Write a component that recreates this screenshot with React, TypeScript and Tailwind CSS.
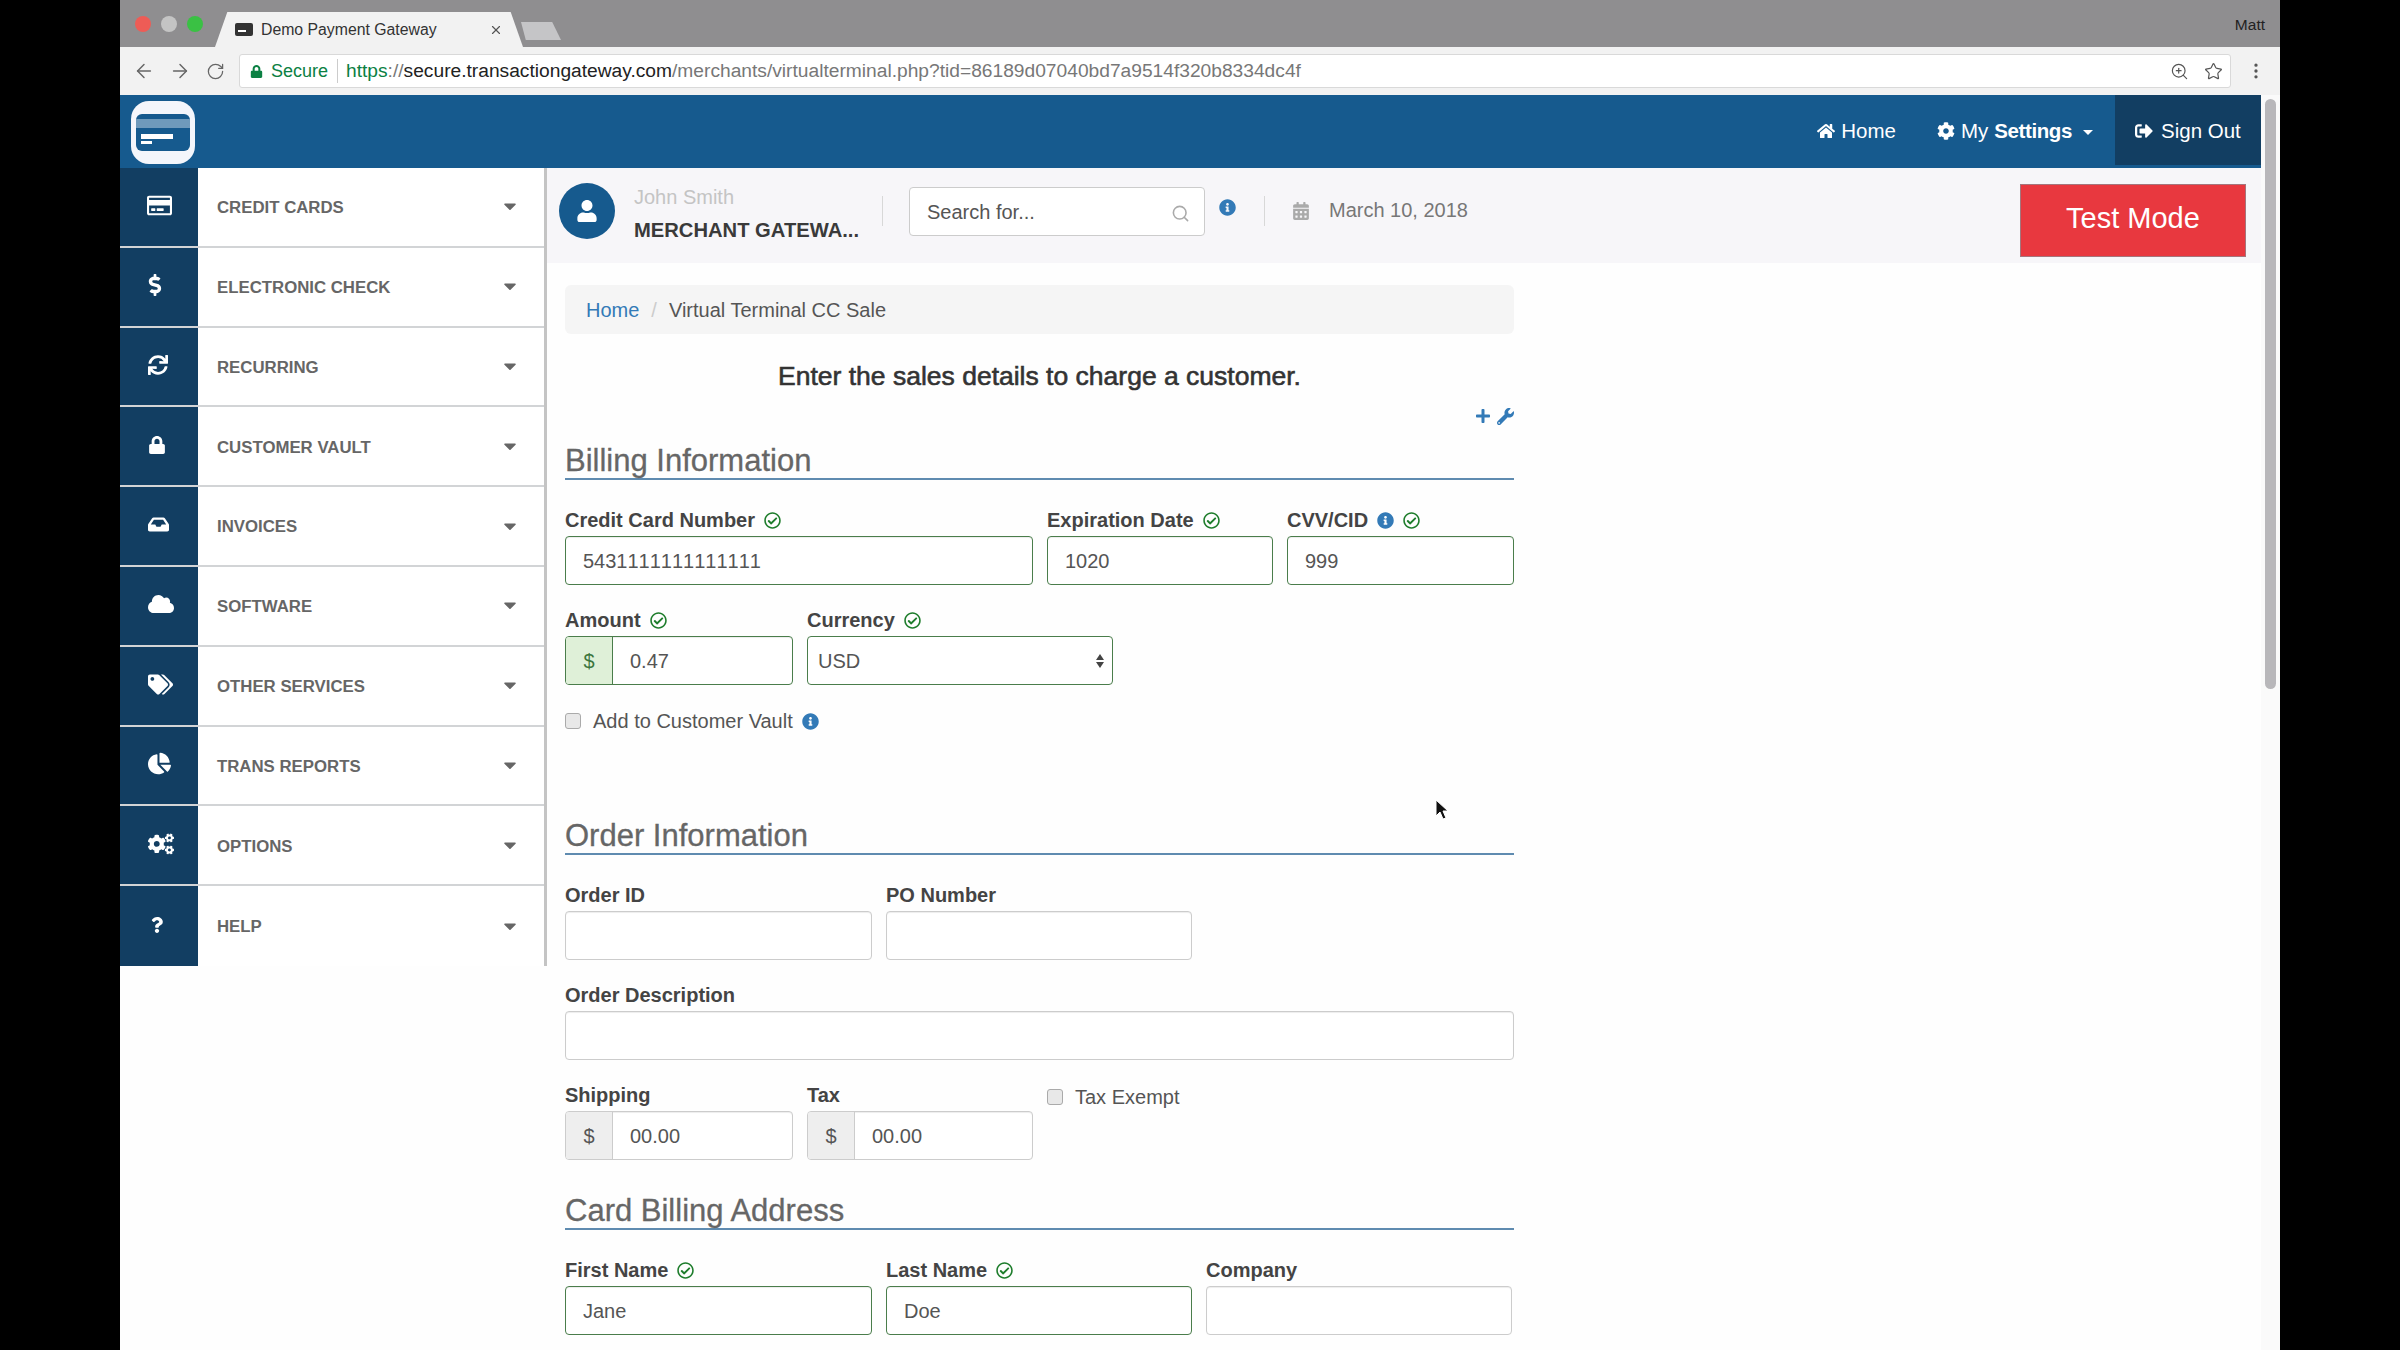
import type { ReactNode } from 'react';
import {
  FaRegCreditCard, FaDollarSign, FaSync, FaLock, FaInbox, FaCloud, FaTags, FaChartPie, FaCogs, FaQuestion,
  FaHome, FaCog, FaSignOutAlt, FaInfoCircle, FaRegCheckCircle, FaPlus, FaWrench, FaCalendarAlt, FaUser, FaCaretDown,
} from 'react-icons/fa';
import { ArrowLeft, ArrowRight, RotateCw, ZoomIn, Star, EllipsisVertical, Search, X } from 'lucide-react';

const menu = [
  { label: 'CREDIT CARDS', icon: <FaRegCreditCard size={25} />, pad: 'pl-[27px]' },
  { label: 'ELECTRONIC CHECK', icon: <FaDollarSign size={22} />, pad: 'pl-[24px]' },
  { label: 'RECURRING', icon: <FaSync size={20} />, pad: 'pl-[28px]' },
  { label: 'CUSTOMER VAULT', icon: <FaLock size={18} />, pad: 'pl-[28px]' },
  { label: 'INVOICES', icon: <FaInbox size={21} />, pad: 'pl-[28px]' },
  { label: 'SOFTWARE', icon: <FaCloud size={26} />, pad: 'pl-[28px]' },
  { label: 'OTHER SERVICES', icon: <FaTags size={25} />, pad: 'pl-[28px]' },
  { label: 'TRANS REPORTS', icon: <FaChartPie size={23} />, pad: 'pl-[28px]' },
  { label: 'OPTIONS', icon: <FaCogs size={26} />, pad: 'pl-[28px]' },
  { label: 'HELP', icon: <FaQuestion size={16} />, pad: 'pl-[29px]' },
];

const Check = () => <FaRegCheckCircle size={17} className="text-[#1e7d2c]" />;
const Info = () => <FaInfoCircle size={17} className="text-[#337ab7]" />;

const Sidebar = () => (
  <div className="flex w-[427px] shrink-0 flex-col self-start border-r-[3px] border-[#c4c4c4]">
    {menu.map(item => (
      <div key={item.label} className="flex h-[79.8px] border-b-2 border-[#d2d4d6] bg-white last:border-b-0">
        <div className={`flex w-[78px] items-center bg-[#123e62] pb-[3px] text-white ${item.pad}`}>{item.icon}</div>
        <div className="flex flex-1 items-center justify-between pl-[19px] pr-[24px] pt-[2px] text-[16.8px] font-bold text-[#666]">
          <span>{item.label}</span>
          <FaCaretDown size={20} className="mb-[3px] text-[#666]" />
        </div>
      </div>
    ))}
  </div>
);

const NavBar = () => (
  <div className="flex h-[73px] shrink-0 items-start justify-end bg-[#165a8e] text-[20.5px] text-white">
    <div className="relative flex h-[70px] items-center">
      <span className="flex items-center gap-[6px] pt-[2px]"><FaHome size={18} />Home</span>
      <span className="ml-[41px] flex items-center gap-[6px] pt-[2px]">
        <FaCog size={18} />My <b className="tracking-[-0.4px]">Settings</b>
        <span className="ml-[5px] mt-[2px] h-0 w-0 border-x-[5px] border-t-[5px] border-x-transparent border-t-white" />
      </span>
      <span className="ml-[22px] flex h-full w-[146px] items-center gap-[8px] bg-[#123e62] pl-[20px] pt-[2px]"><FaSignOutAlt size={18} />Sign Out</span>
    </div>
  </div>
);

const TopStrip = () => (
  <div className="flex h-[95px] shrink-0 items-start bg-[#f7f6f9] pl-[12px] pr-[15px] pt-[15px]">
    <div className="flex h-[56px] w-[56px] shrink-0 items-center justify-center rounded-full bg-[#165a8e] text-white">
      <FaUser size={22} />
    </div>
    <div className="ml-[19px] w-[226px] whitespace-nowrap">
      <div className="text-[20px] leading-[28px] text-[#c4c4c4]">John Smith</div>
      <div className="mt-[5px] text-[20.2px] font-bold leading-[28px] text-[#3a3a3a]">MERCHANT GATEWA...</div>
    </div>
    <div className="ml-[22px] mt-[13px] h-[30px] w-px bg-[#d8d8d8]" />
    <div className="ml-[26px] mt-[4px] flex h-[49px] w-[296px] items-center justify-between rounded border border-[#ccc] bg-white pl-[17px] pr-[14px] text-[20px] text-[#555]">
      Search for...
      <Search size={19} className="mt-[4px] text-[#aaa]" />
    </div>
    <div className="ml-[14px] mt-[16px]"><Info /></div>
    <div className="ml-[28px] mt-[13px] h-[30px] w-px bg-[#d8d8d8]" />
    <FaCalendarAlt size={18} className="ml-[27px] mt-[19px] text-[#aaa]" />
    <div className="ml-[19px] mt-[13px] text-[20px] leading-[28px] text-[#777]">March 10, 2018</div>
    <div className="ml-auto mt-[1px] flex h-[73px] w-[226px] items-center justify-center border border-[#a5757c] bg-[#e8383f] pb-[4px] text-[29px] text-white">
      Test Mode
    </div>
  </div>
);

const SectionTitle = ({ children, className }: { children: ReactNode; className: string }) => (
  <h2 className={`flex h-[44px] items-end border-b-2 border-[#5f8bb0] text-[31px] leading-[35px] text-[#666] [-webkit-text-stroke:0.3px_#666] ${className}`}>{children}</h2>
);

interface FieldProps {
  label: string;
  value?: string;
  width: string;
  ok?: boolean;
  info?: boolean;
  addon?: boolean;
}

const Field = ({ label, value = '', width, ok, info, addon }: FieldProps) => {
  const border = ok ? 'border-[#4a7d4b]' : 'border-[#ccc]';
  return (
    <div className={width}>
      <div className="mb-[3px] flex h-[26px] items-center gap-[9px] text-[20px] font-bold text-[#444]">
        {label}
        {info && <Info />}
        {ok && <Check />}
      </div>
      <div className={`flex h-[49px] overflow-hidden rounded border bg-white shadow-[inset_0_1px_1px_rgba(0,0,0,0.075)] ${border}`}>
        {addon && (
          <div className={`flex w-[47px] shrink-0 items-center justify-center border-r text-[20px] ${ok ? 'border-[#4a7d4b] bg-[#dff0d8] text-[#3c763d]' : 'border-[#ccc] bg-[#eee] text-[#555]'}`}>
            $
          </div>
        )}
        <input readOnly value={value} className="h-full min-w-0 flex-1 bg-transparent pl-[17px] pt-[2px] text-[20px] text-[#555] outline-none [font-kerning:none]" />
      </div>
    </div>
  );
};

const CheckRow = ({ label, info, className }: { label: string; info?: boolean; className: string }) => (
  <div className={`flex h-[24px] items-center text-[20px] text-[#555] ${className}`}>
    <span className="h-[16px] w-[16px] rounded-[3px] border border-[#aaa] bg-[#e8e8e8]" />
    <span className="ml-[12px]">{label}</span>
    {info && <span className="ml-[9px]"><Info /></span>}
  </div>
);

const Form = () => (
  <div className="w-[949px]">
    <div className="mt-[22px] flex h-[49px] items-center rounded-md bg-[#f5f5f5] pl-[21px] text-[20px] text-[#555]">
      <span className="text-[#337ab7]">Home</span>
      <span className="mx-[12px] text-[#ccc]">/</span>
      Virtual Terminal CC Sale
    </div>
    <div className="mt-[24px] h-[36px] text-center text-[26.5px] leading-[36px] text-[#333] [-webkit-text-stroke:0.6px_#333]">
      Enter the sales details to charge a customer.
    </div>
    <div className="mt-[12px] flex h-[20px] items-center justify-end gap-[6px] text-[#337ab7]">
      <FaPlus size={16} />
      <FaWrench size={17} />
    </div>
    <SectionTitle className="mt-[10px]">Billing Information</SectionTitle>
    <div className="mt-[27px] flex gap-[14px]">
      <Field label="Credit Card Number" value="5431111111111111" width="w-[468px]" ok />
      <Field label="Expiration Date" value="1020" width="w-[226px]" ok />
      <Field label="CVV/CID" value="999" width="w-[227px]" ok info />
    </div>
    <div className="mt-[22px] flex gap-[14px]">
      <Field label="Amount" value="0.47" width="w-[228px]" ok addon />
      <div className="w-[306px]">
        <div className="mb-[3px] flex h-[26px] items-center gap-[9px] text-[20px] font-bold text-[#444]">Currency <Check /></div>
        <div className="flex h-[49px] items-center justify-between rounded border border-[#4a7d4b] bg-white pl-[10px] pr-[8px] text-[20px] text-[#555]">
          USD
          <span className="flex flex-col gap-[2px]">
            <span className="h-0 w-0 border-x-[4px] border-b-[6px] border-x-transparent border-b-[#444]" />
            <span className="h-0 w-0 border-x-[4px] border-t-[6px] border-x-transparent border-t-[#444]" />
          </span>
        </div>
      </div>
    </div>
    <CheckRow label="Add to Customer Vault" info className="mt-[24px]" />

    <SectionTitle className="mt-[78px]">Order Information</SectionTitle>
    <div className="mt-[27px] flex gap-[14px]">
      <Field label="Order ID" width="w-[307px]" />
      <Field label="PO Number" width="w-[306px]" />
    </div>
    <div className="mt-[22px]">
      <Field label="Order Description" width="w-full" />
    </div>
    <div className="mt-[22px] flex gap-[14px]">
      <Field label="Shipping" value="00.00" width="w-[228px]" addon />
      <Field label="Tax" value="00.00" width="w-[226px]" addon />
      <CheckRow label="Tax Exempt" className="mt-[3px]" />
    </div>

    <SectionTitle className="mt-[26px]">Card Billing Address</SectionTitle>
    <div className="mt-[27px] flex gap-[14px]">
      <Field label="First Name" value="Jane" width="w-[307px]" ok />
      <Field label="Last Name" value="Doe" width="w-[306px]" ok />
      <Field label="Company" width="w-[306px]" />
    </div>
  </div>
);

const BrowserChrome = () => (
  <>
    <div className="relative flex h-[47px] shrink-0 items-end bg-[#8f8e90]">
      <span className="absolute left-[15px] top-[16px] h-[16px] w-[16px] rounded-full bg-[#ee5c56]" />
      <span className="absolute left-[41px] top-[16px] h-[16px] w-[16px] rounded-full bg-[#c4c4c4]" />
      <span className="absolute left-[67px] top-[16px] h-[16px] w-[16px] rounded-full bg-[#3ac144]" />
      <div className="ml-[95px] flex h-[35px] w-[308px] items-center bg-[#f2f2f2] pl-[20px] text-[15.8px] text-[#333] [clip-path:polygon(4%_0,96%_0,100%_100%,0_100%)]">
        <span className="relative h-[13px] w-[18px] rounded-[2px] bg-[#333]">
          <span className="absolute left-[3px] top-[7px] h-[2px] w-[8px] bg-white" />
        </span>
        <span className="ml-[8px] w-[228px]">Demo Payment Gateway</span>
        <X size={14} className="text-[#555]" />
      </div>
      <div className="mb-[7px] ml-[-2px] h-[18px] w-[40px] bg-[#c5c5c7] [clip-path:polygon(0_0,78%_0,100%_100%,12%_100%)]" />
      <span className="absolute right-[15px] top-[15px] text-[15.5px] leading-[20px] text-[#222]">Matt</span>
    </div>
    <div className="flex h-[48px] shrink-0 items-center bg-[#f2f2f2] pl-[13px] pr-[14px] text-[#666]">
      <ArrowLeft size={22} strokeWidth={1.6} />
      <ArrowRight size={22} strokeWidth={1.6} className="ml-[14px]" />
      <RotateCw size={19} strokeWidth={1.6} className="ml-[15px]" />
      <div className="ml-[14px] flex h-[34px] w-[1993px] items-center rounded-[3px] border border-[#d9d9d9] bg-white pl-[10px] pr-[7px] text-[18px]">
        <FaLock size={13} className="text-[#0b8043]" />
        <span className="ml-[8px] text-[#0b8043]">Secure</span>
        <span className="ml-[9px] h-[24px] w-px bg-[#ccc]" />
        <span className="ml-[8px] flex-1 whitespace-nowrap text-[19.2px] text-[#777]">
          <span className="text-[#0b8043]">https</span>://<span className="text-[#222]">secure.transactiongateway.com</span>/merchants/virtualterminal.php?tid=86189d07040bd7a9514f320b8334dc4f
        </span>
        <ZoomIn size={19} strokeWidth={1.5} className="text-[#555]" />
        <Star size={19} strokeWidth={1.5} className="ml-[15px] text-[#555]" />
      </div>
      <EllipsisVertical size={20} className="ml-[15px] text-[#555]" />
    </div>
  </>
);

export default function App() {
  return (
    <div className="relative h-[1350px] w-[2400px] overflow-hidden bg-black font-['Liberation_Sans',Arial,sans-serif]">
      <div className="ml-[120px] flex h-full w-[2160px] flex-col">
        <BrowserChrome />
        <div className="flex min-h-0 flex-1 bg-white">
          <div className="relative flex min-w-0 flex-1 flex-col bg-[#fefefe]">
            <div className="absolute left-[11px] top-[6px] flex h-[63px] w-[64px] items-center justify-center rounded-[18px] bg-[#f4f6fb]">
              <div className="h-[37px] w-[54px] overflow-hidden rounded-[6px] bg-[#165a8e]">
                <div className="mt-[5px] h-[9px] bg-[#6f9abb]" />
                <div className="ml-[5px] mt-[6px] h-[5px] w-[32px] bg-white" />
                <div className="ml-[5px] mt-[2px] h-[3px] w-[11px] bg-white" />
              </div>
            </div>
            <NavBar />
            <div className="flex min-h-0 flex-1">
              <Sidebar />
              <div className="flex min-w-0 flex-1 flex-col">
                <TopStrip />
                <div className="pl-[18px]">
                  <Form />
                </div>
              </div>
            </div>
          </div>
          <div className="w-[19px] shrink-0 bg-[#fafafa] pt-[4px]">
            <div className="mx-auto h-[590px] w-[11px] rounded-full bg-[#b8b7ba]" />
          </div>
        </div>
      </div>
      {/* mouse pointer */}
      <svg className="absolute left-[1435px] top-[799px]" width="14" height="22" viewBox="0 0 14 22">
        <path d="M1 1v16l4-4 3 7 3-1-3-7h5z" fill="#111" stroke="#fff" strokeWidth="1" />
      </svg>
    </div>
  );
}
